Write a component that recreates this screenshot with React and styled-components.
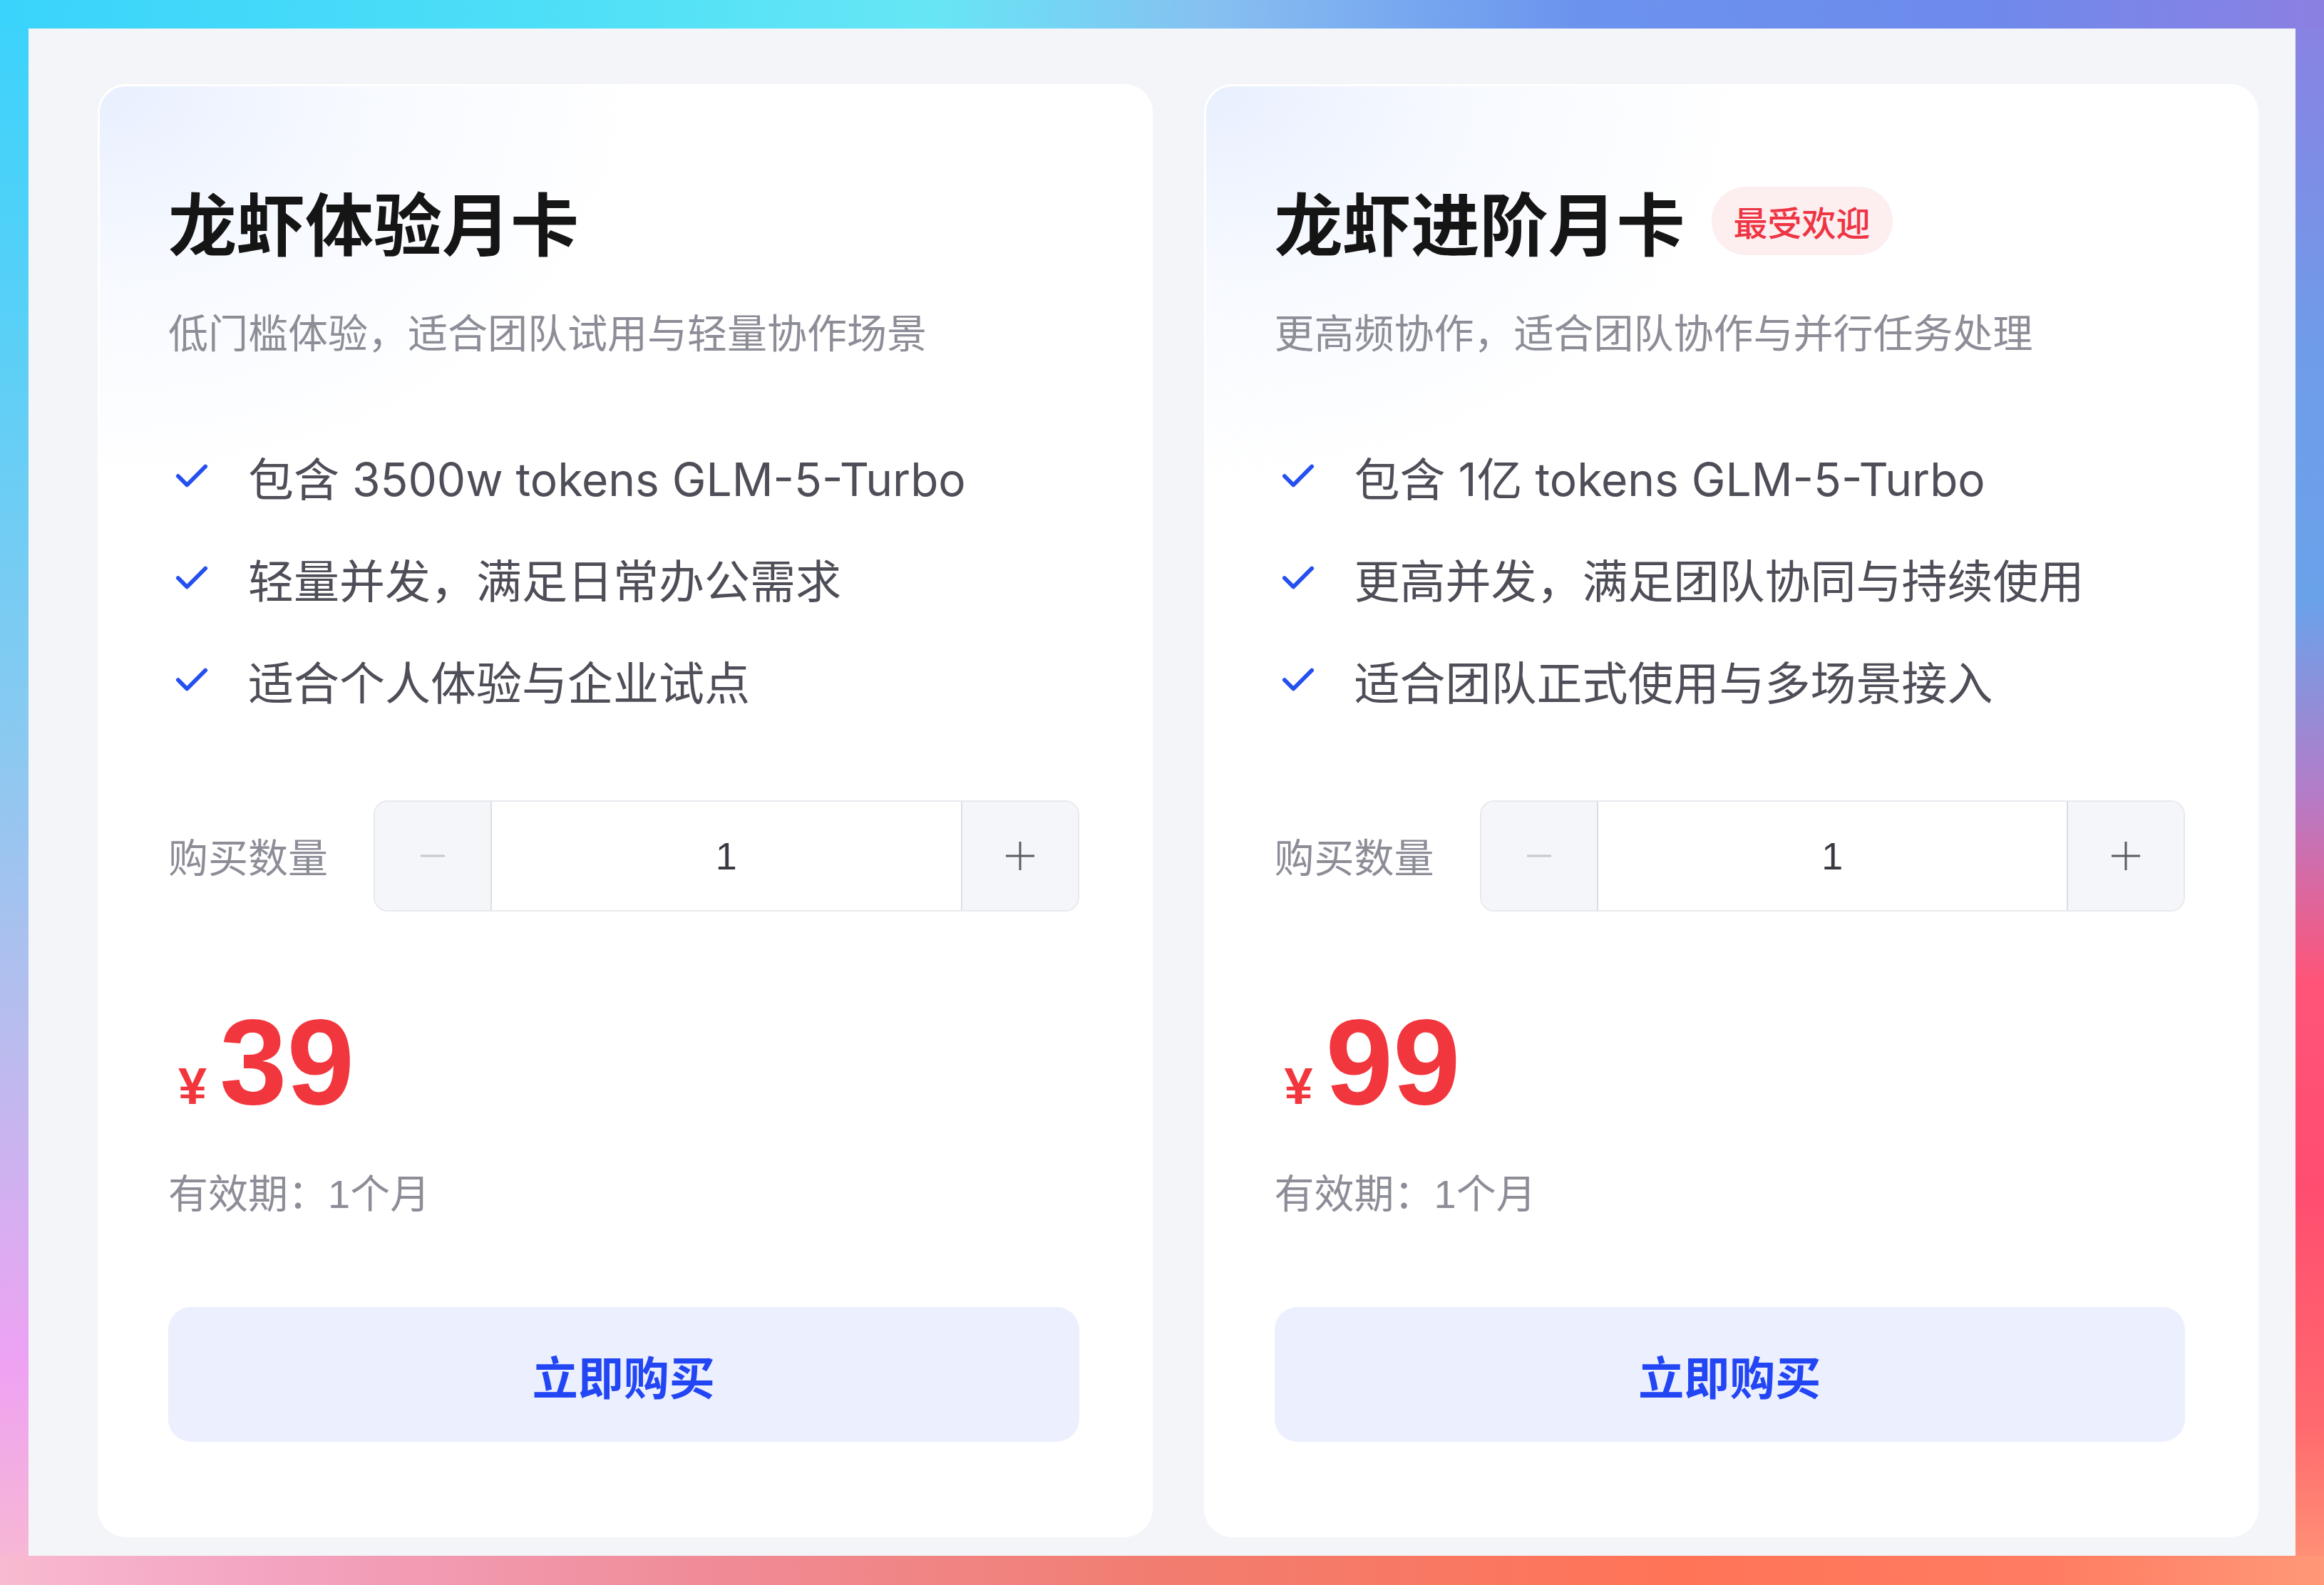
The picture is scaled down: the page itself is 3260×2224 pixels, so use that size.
import React from "react";
import styled, { createGlobalStyle } from "styled-components";

const Global = createGlobalStyle`
  html, body { margin: 0; padding: 0; }
  body { font-family: "Liberation Sans", "Noto Sans CJK SC", sans-serif; }
  * { box-sizing: border-box; }
`;

const Page = styled.div`
  min-height: 100vh;
  padding: 40px 40px 41px;
  display: flex;
  background:
    linear-gradient(to right, #3ad3fb 0%, #4fe0f7 25%, #66e6f5 40%, #86c0f1 52%, #6b93ee 68%, #6d8aec 85%, #8b80e2 100%) top left / 100% 40px no-repeat,
    linear-gradient(to right, #f8bad0 0%, #f3a3c0 12%, #f08c98 30%, #f17d70 50%, #ff7457 72%, #ff7c62 88%, #ff9878 100%) bottom left / 100% 41px no-repeat,
    linear-gradient(to bottom, #3ad3fb 0%, #58d0f7 20%, #86caf1 45%, #b8bdee 65%, #eea2f3 86%, #f8bad0 100%) top left / 40px 100% no-repeat,
    linear-gradient(to bottom, #8b80e2 0%, #6f9ce9 22%, #6aa2ea 38%, #b47cc8 50%, #ff5478 62%, #ff4d70 75%, #ff6a6e 90%, #ff9878 100%) top right / 40px 100% no-repeat,
    #f4f5f8;
`;

const Panel = styled.div`
  flex: 1;
  background: #f4f5f8;
  border-radius: 30px;
  padding: 78px 52px 26px 97px;
  display: grid;
  grid-template-columns: 1fr 1fr;
  gap: 72px;
`;

const Card = styled.div`
  border: 3px solid #ffffff;
  border-radius: 40px;
  background:
    radial-gradient(ellipse 760px 560px at 0 0, #e8effe 0%, rgba(240, 245, 255, 0.6) 45%, rgba(255, 255, 255, 0) 100%),
    #ffffff;
  padding: 122px 100px 0 96px;
  display: flex;
  flex-direction: column;
`;

const TitleRow = styled.div`
  display: flex;
  align-items: center;
  gap: 37px;
`;

const Title = styled.h2`
  margin: 0;
  font-family: "Noto Sans CJK SC", sans-serif;
  font-weight: 700;
  font-size: 96px;
  line-height: 134px;
  color: #151515;
`;

const Badge = styled.span`
  display: inline-flex;
  align-items: center;
  height: 96px;
  padding: 0 31px;
  border-radius: 48px;
  background: #fdeef0;
  color: #ef3443;
  font-family: "Noto Sans CJK SC", sans-serif;
  font-size: 48px;
  font-weight: 500;
`;

const Subtitle = styled.p`
  margin: 45px 0 0;
  font-family: "Noto Sans CJK SC", sans-serif;
  font-size: 56px;
  line-height: 84px;
  color: #8d8d98;
`;

const Features = styled.ul`
  list-style: none;
  margin: 114px 0 0;
  padding: 0;
  display: flex;
  flex-direction: column;
  gap: 47px;
`;

const Feature = styled.li`
  display: flex;
  align-items: center;
  height: 96px;
  font-family: "Inter", "Noto Sans CJK SC", sans-serif;
  font-size: 64px;
  color: #4e4e58;
`;

const CheckBox = styled.span`
  display: inline-flex;
  width: 56px;
  margin-right: 56px;
  padding-left: 10px;
`;

const Stepper = styled.div`
  margin-top: 121px;
  display: flex;
  align-items: center;
  gap: 64px;
`;

const StepLabel = styled.span`
  font-family: "Noto Sans CJK SC", sans-serif;
  font-size: 56px;
  color: #8d8d98;
  white-space: nowrap;
  margin-top: -4px;
`;

const StepBox = styled.div`
  flex: 1;
  height: 156px;
  display: flex;
  border: 2px solid #e8e9ee;
  border-radius: 20px;
  overflow: hidden;
`;

const StepButton = styled.button`
  width: 164px;
  border: none;
  ${(p) => (p.$side === "left" ? "border-right" : "border-left")}: 2px solid #dcdde3;
  background: #f5f6f9;
  display: flex;
  align-items: center;
  justify-content: center;
  padding: 0;
  cursor: pointer;
`;

const StepValue = styled.div`
  flex: 1;
  background: #ffffff;
  display: flex;
  align-items: center;
  justify-content: center;
  font-size: 54px;
  color: #3a3a42;
`;

const Price = styled.div`
  margin-top: 127px;
  display: flex;
  align-items: baseline;
  color: #f2363d;
  font-family: "Liberation Sans", Arial, sans-serif;
  font-weight: 700;
`;

const Currency = styled.span`
  font-size: 72px;
  line-height: 72px;
  margin: 0 18px 0 14px;
`;

const Amount = styled.span`
  font-size: 170px;
  line-height: 168px;
`;

const Validity = styled.p`
  margin: 60px 0 0;
  font-size: 56px;
  line-height: 84px;
  color: #8d8d98;
`;

const BuyButton = styled.button`
  margin-top: 116px;
  height: 189px;
  width: 100%;
  border: none;
  border-radius: 32px;
  background: #ebeffe;
  color: #2346f5;
  font-family: "Noto Sans CJK SC", sans-serif;
  font-weight: 700;
  font-size: 64px;
  cursor: pointer;
`;

const Check = () => (
  <svg width="48" height="40" viewBox="0 0 48 40" fill="none">
    <path d="M4 20 L17 33 L44 6" stroke="#2450f0" strokeWidth="6" strokeLinecap="round" strokeLinejoin="round" />
  </svg>
);

const Minus = () => (
  <svg width="40" height="40" viewBox="0 0 40 40">
    <rect x="3" y="18.5" width="34" height="3" fill="#c6c7ce" />
  </svg>
);

const Plus = () => (
  <svg width="44" height="44" viewBox="0 0 44 44">
    <rect x="2" y="20.5" width="40" height="3" fill="#5b5b65" />
    <rect x="20.5" y="2" width="3" height="40" fill="#5b5b65" />
  </svg>
);

const plans = [
  {
    title: "龙虾体验月卡",
    subtitle: "低门槛体验，适合团队试用与轻量协作场景",
    features: ["包含 3500w tokens GLM-5-Turbo", "轻量并发，满足日常办公需求", "适合个人体验与企业试点"],
    price: "39",
  },
  {
    title: "龙虾进阶月卡",
    badge: "最受欢迎",
    subtitle: "更高频协作，适合团队协作与并行任务处理",
    features: ["包含 1亿 tokens GLM-5-Turbo", "更高并发，满足团队协同与持续使用", "适合团队正式使用与多场景接入"],
    price: "99",
  },
];

function PlanCard({ plan }) {
  return (
    <Card>
      <TitleRow>
        <Title>{plan.title}</Title>
        {plan.badge && <Badge>{plan.badge}</Badge>}
      </TitleRow>
      <Subtitle>{plan.subtitle}</Subtitle>
      <Features>
        {plan.features.map((f) => (
          <Feature key={f}>
            <CheckBox>
              <Check />
            </CheckBox>
            {f}
          </Feature>
        ))}
      </Features>
      <Stepper>
        <StepLabel>购买数量</StepLabel>
        <StepBox>
          <StepButton $side="left" aria-label="减少">
            <Minus />
          </StepButton>
          <StepValue>1</StepValue>
          <StepButton $side="right" aria-label="增加">
            <Plus />
          </StepButton>
        </StepBox>
      </Stepper>
      <Price>
        <Currency>¥</Currency>
        <Amount>{plan.price}</Amount>
      </Price>
      <Validity>有效期：1个月</Validity>
      <BuyButton>立即购买</BuyButton>
    </Card>
  );
}

export default function App() {
  return (
    <>
      <Global />
      <Page>
        <Panel>
          {plans.map((p) => (
            <PlanCard key={p.title} plan={p} />
          ))}
        </Panel>
      </Page>
    </>
  );
}
